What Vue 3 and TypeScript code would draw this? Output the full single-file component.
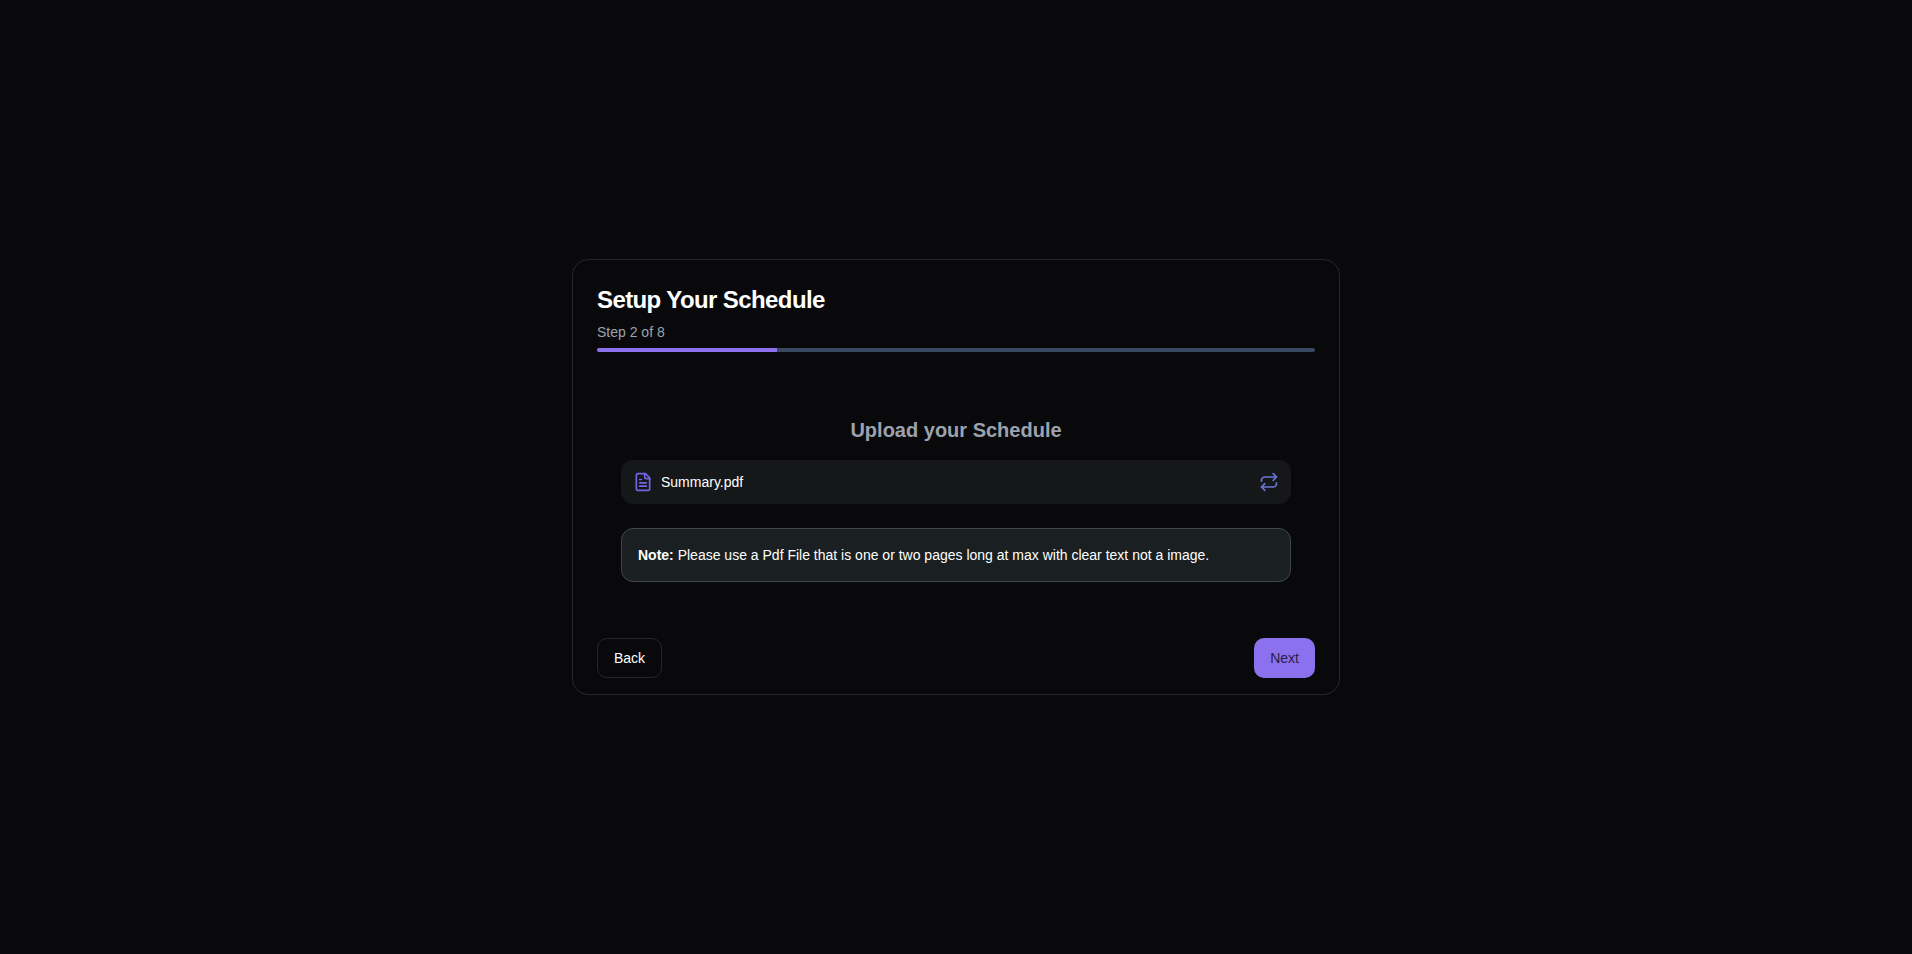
<script setup lang="ts">
const step = 2;
const total = 8;
const progress = `${(step / total) * 100}%`;
</script>

<template>
  <main class="page">
    <section class="card">
      <header class="head">
        <h1 class="title">Setup Your Schedule</h1>
        <p class="step">Step {{ step }} of {{ total }}</p>
        <div class="track">
          <div class="fill" :style="{ width: progress }"></div>
        </div>
      </header>

      <div class="body">
        <h2 class="subtitle">Upload your Schedule</h2>
        <div class="file">
          <div class="file-name">
            <svg class="icon file-icon" viewBox="0 0 24 24" fill="none" stroke="currentColor" stroke-width="2" stroke-linecap="round" stroke-linejoin="round">
              <path d="M15 2H6a2 2 0 0 0-2 2v16a2 2 0 0 0 2 2h12a2 2 0 0 0 2-2V7Z" />
              <path d="M14 2v4a2 2 0 0 0 2 2h4" />
              <path d="M10 9H8" />
              <path d="M16 13H8" />
              <path d="M16 17H8" />
            </svg>
            <span>Summary.pdf</span>
          </div>
          <svg class="icon swap-icon" viewBox="0 0 24 24" fill="none" stroke="currentColor" stroke-width="2" stroke-linecap="round" stroke-linejoin="round">
            <path d="m17 2 4 4-4 4" />
            <path d="M3 11v-1a4 4 0 0 1 4-4h14" />
            <path d="m7 22-4-4 4-4" />
            <path d="M21 13v1a4 4 0 0 1-4 4H3" />
          </svg>
        </div>
        <p class="note"><strong>Note:</strong> Please use a Pdf File that is one or two pages long at max with clear text not a image.</p>
      </div>

      <footer class="actions">
        <button class="btn back" type="button">Back</button>
        <button class="btn next" type="button">Next</button>
      </footer>
    </section>
  </main>
</template>

<style>
html,
body {
  margin: 0;
  background: #09090c;
}
</style>

<style scoped>
.page {
  min-height: 954px;
  box-sizing: border-box;
  display: flex;
  align-items: center;
  justify-content: center;
  background: #09090c;
  font-family: "Liberation Sans", Arial, sans-serif;
  color: #fff;
}
.card {
  width: 768px;
  box-sizing: border-box;
  padding: 24px 24px 16px;
  background: #09090c;
  border: 1px solid #27272a;
  border-radius: 16px;
}
.title {
  margin: 0;
  font-size: 24px;
  line-height: 32px;
  font-weight: 700;
  letter-spacing: -0.025em;
}
.step {
  margin: 6px 0 6px;
  font-size: 14px;
  line-height: 20px;
  color: #9ca3af;
}
.track {
  height: 4px;
  border-radius: 999px;
  background: #3b4862;
  overflow: hidden;
}
.fill {
  height: 100%;
  background: #8b71ee;
}
.body {
  padding: 64px 24px 56px;
}
.subtitle {
  margin: 0 0 16px;
  font-size: 20px;
  line-height: 28px;
  font-weight: 700;
  text-align: center;
  color: #9ca3af;
}
.file {
  display: flex;
  align-items: center;
  justify-content: space-between;
  padding: 12px;
  background: #161719;
  border-radius: 12px;
  font-size: 14px;
  line-height: 20px;
}
.file-name {
  display: flex;
  align-items: center;
  gap: 8px;
}
.icon {
  width: 20px;
  height: 20px;
  flex: none;
}
.file-icon {
  color: #7366e4;
}
.swap-icon {
  color: #6878d8;
}
.note {
  margin: 24px 0 0;
  padding: 16px;
  background: #1a2021;
  border: 1px solid #3d4a48;
  border-radius: 12px;
  font-size: 14px;
  line-height: 20px;
}
.note strong {
  font-weight: 700;
}
.actions {
  display: flex;
  justify-content: space-between;
}
.btn {
  height: 40px;
  padding: 0 16px;
  border-radius: 10px;
  font-family: inherit;
  font-size: 14px;
  line-height: 20px;
  cursor: pointer;
}
.back {
  background: transparent;
  border: 1px solid #27272a;
  color: #fff;
}
.next {
  background: #8b71ee;
  border: 0;
  color: #2a2040;
}
</style>
